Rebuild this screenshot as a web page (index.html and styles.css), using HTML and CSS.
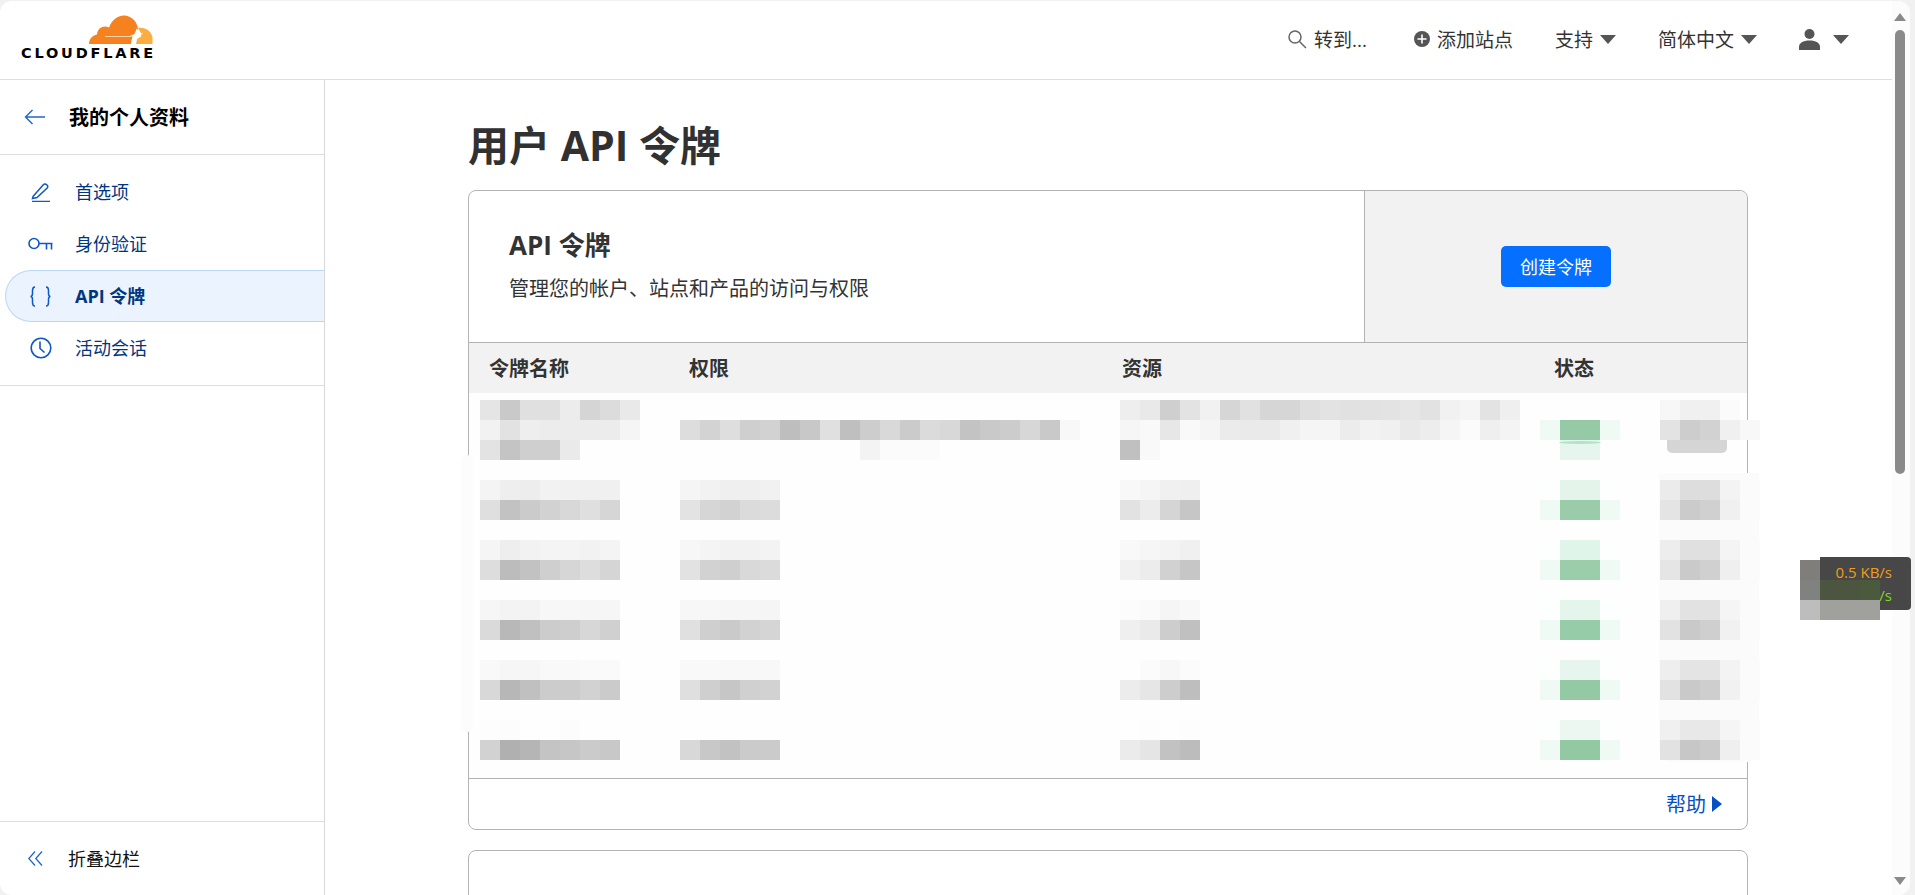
FILE: index.html
```html
<!DOCTYPE html>
<html lang="zh-CN">
<head>
  <meta charset="UTF-8">
  <meta name="viewport" content="width=device-width, initial-scale=1.0">
  <title>用户 API 令牌 | Cloudflare</title>
  <link rel="stylesheet" href="styles.css">
</head>
<body>
  <div class="window">
    <div class="page">
      <header class="topbar">
        <a class="logo">
          <svg class="logo-cloud" viewBox="0 0 64 30" width="64" height="30">
            <path fill="#f6821f" d="M0 29C.3 24 3 20.500 8 19.500 8.500 13 14.500 10 20 12.500 23.500 3.500 30.500 0 36 .5 43 1.500 48 6.500 49 13.500 47 17 45 20 44 21 42 25 42.500 27 42 29Z"/>
            <path fill="#fbad41" d="M49 13C55 11.500 62 15 63.500 22V29H45.500C46 26 47.500 24 49.500 23 52 22 53 20.500 52 18.500 51 16 50 15 49 13Z"/>
            <path fill="none" stroke="#fff" stroke-width=".8" stroke-opacity=".8" d="M16 21.500H42"/>
            <path fill="#fff" d="M48 13 48.800 18 54.500 18.500 49 20.500 47 29H44.500L45 22 41 21 45.500 19Z"/>
          </svg>
          <span class="logo-text">CLOUDFLARE</span>
        </a>
        <nav class="top-actions">
          <a class="top-action search-action">
            <svg class="icon-search" viewBox="0 0 20 20" width="20" height="20"><circle cx="8" cy="8" r="6" fill="none" stroke="#666" stroke-width="1.500"/><path d="M12.500 12.500 19 19" stroke="#666" stroke-width="1.500"/></svg>
            转到...
          </a>
          <a class="top-action">
            <svg viewBox="0 0 16 16" width="16" height="16"><circle cx="8" cy="8" r="8" fill="#555"/><path d="M8 3.500v9M3.500 8h9" stroke="#fff" stroke-width="1.600"/></svg>
            添加站点
          </a>
          <a class="top-action">支持 <span class="caret"></span></a>
          <a class="top-action">简体中文 <span class="caret"></span></a>
          <a class="top-action user-action">
            <svg viewBox="0 0 21 21" width="21" height="21"><circle cx="10.500" cy="5" r="5" fill="#555"/><path fill="#555" d="M0 21v-3c0-4 4-6.500 10.500-6.500S21 14 21 18v3Z"/></svg>
            <span class="caret"></span>
          </a>
        </nav>
      </header>

      <div class="content">
        <aside class="sidebar">
          <div class="side-head">
            <svg viewBox="0 0 21 16" width="21" height="16"><path d="M8.500 1 1.500 8l7 7M1.500 8H21" fill="none" stroke="#1f66cc" stroke-width="1.400"/></svg>
            <span>我的个人资料</span>
          </div>
          <ul class="side-nav">
            <li class="side-item">
              <span class="side-icon"><svg viewBox="0 0 20 20" width="20" height="20"><path d="M2 14.500 12.500 2.500c1-1 2.500-.5 3.500.5s1 2 .2 3L6 15.500 1.500 16.500ZM1 19.500h18" fill="none" stroke="#0f58c6" stroke-width="1.500"/></svg></span>
              首选项
            </li>
            <li class="side-item">
              <span class="side-icon"><svg viewBox="0 0 25 14" width="25" height="14"><circle cx="6" cy="6.500" r="5" fill="none" stroke="#0f58c6" stroke-width="1.600"/><path d="M11 6.500h13.500M18.500 6.500v6M23.500 6.500v6" fill="none" stroke="#0f58c6" stroke-width="1.600"/></svg></span>
              身份验证
            </li>
            <li class="side-item active">
              <span class="side-icon"><svg viewBox="0 0 21 21" width="21" height="21"><path d="M5 1C2.500 1 2.500 2.500 2.500 4.500v3C2.500 9 2 10.500.5 10.500 2 10.500 2.500 12 2.500 13.500v3C2.500 18.500 2.500 20 5 20M16 1c2.500 0 2.500 1.500 2.500 3.500v3c0 1.500.5 3 2 3-1.500 0-2 1.500-2 3v3c0 2 0 3.500-2.500 3.500" fill="none" stroke="#0f58c6" stroke-width="1.500"/></svg></span>
              API 令牌
            </li>
            <li class="side-item">
              <span class="side-icon"><svg viewBox="0 0 22 22" width="22" height="22"><circle cx="11" cy="11" r="9.800" fill="none" stroke="#0f58c6" stroke-width="1.600"/><path d="M10 4.500v7l4.500 4" fill="none" stroke="#0f58c6" stroke-width="1.600"/></svg></span>
              活动会话
            </li>
          </ul>
          <div class="side-foot">
            <svg viewBox="0 0 15 15" width="15" height="15"><path d="M7 .5 .8 7.500 7 14.500M14 .5 7.800 7.500 14 14.500" fill="none" stroke="#1f66cc" stroke-width="1.300"/></svg>
            <span>折叠边栏</span>
          </div>
        </aside>

        <main class="main">
          <h1>用户 API 令牌</h1>

          <section class="card">
            <div class="card-top">
              <div class="card-intro">
                <h2>API 令牌</h2>
                <p>管理您的帐户、站点和产品的访问与权限</p>
              </div>
              <div class="card-cta">
                <button class="btn-primary">创建令牌</button>
              </div>
            </div>

            <div class="table-head">
              <span>令牌名称</span>
              <span>权限</span>
              <span>资源</span>
              <span>状态</span>
            </div>

            <!-- the row values are blurred out in the screenshot, so each cell is a mosaic -->
            <div class="table-body">
              <div class="token-row first">
                <div class="mosaic" data-cells="e5 c9 e0 e0 ec d5 dc e9|f2 e2 ee ec ec ec ec f5|e3 c4 cf cf ea"></div>
                <div class="mosaic" data-cells="--|dd d3 de cf d2 be c8 e0 bf cd d9 cb db d8 c3 c9 cc d7 c9 f8|fe fe -- -- -- -- -- -- -- f3 fb fb fb"></div>
                <div class="mosaic" data-cells="ee e9 cf e3 f1 d6 e1 d6 d6 df e3 e1 e2 e3 e6 e2 f1 f5 e3 ef|f6 f9 e7 f9 f5 eb ea ea f0 f5 f5 ec f2 f0 e9 ed f5 fb ef f4|c0 f9"></div>
                <div class="mosaic status-cell" data-cells="--|eefaf3 96caa6 96caa6 eefaf3|-- e6f5ed e6f5ed"><i class="status-edge"></i></div>
                <div class="mosaic action-cell" data-cells="f7 f0 f0 fb|e3 cd d2 f0 f8"><i class="action-edge"></i></div>
              </div>
              <div class="token-row">
                <div class="mosaic" data-cells="f4 ee ed f2 f1 f0 f0|df c2 cb d2 d8 df d6"></div>
                <div class="mosaic" data-cells="f5 f2 ef ef f1|e3 d6 d2 db dc"></div>
                <div class="mosaic" data-cells="f8 f5 f0 ef|e2 ec d5 c6"></div>
                <div class="mosaic status-cell" data-cells="fcfffd e3f5ea e3f5ea fcfffd|eefaf3 9accaa 9accaa eefaf3"></div>
                <div class="mosaic action-cell" data-cells="eb dd dd f3 fb|e4 cb d0 f0 fb"></div>
              </div>
              <div class="token-row">
                <div class="mosaic" data-cells="f5 ee f2 f4 f4 f2 f4|dd bc c2 cf d6 dd d5"></div>
                <div class="mosaic" data-cells="f7 f4 f2 f2 f3|e2 d2 cf d9 db"></div>
                <div class="mosaic" data-cells="f9 f6 f3 f0|f1 ec d1 c6"></div>
                <div class="mosaic status-cell" data-cells="fcfffd e0f5e9 e0f5e9 fcfffd|eefaf3 9bcdaa 9bcdaa eefaf3"></div>
                <div class="mosaic action-cell" data-cells="ed e0 e0 f4 fb|e5 ca d0 ef fb"></div>
              </div>
              <div class="token-row">
                <div class="mosaic" data-cells="f6 f3 f3 f7 f7 f6 f6|da b8 c0 cc ce d7 d0"></div>
                <div class="mosaic" data-cells="f7 f7 f6 f6 f5|e0 cf ca d2 d5"></div>
                <div class="mosaic" data-cells="fc fa f5 f8|ef ea cd c0"></div>
                <div class="mosaic status-cell" data-cells="fcfffd e4f5ec e4f5ec fcfffd|eefaf3 96cca8 96cca8 eefaf3"></div>
                <div class="mosaic action-cell" data-cells="ef e2 e2 f5 fb|e2 c9 cf f1 fb"></div>
              </div>
              <div class="token-row">
                <div class="mosaic" data-cells="f9 f6 f6 f9 f9 fa fa|d8 b7 c0 cc cc d2 cb"></div>
                <div class="mosaic" data-cells="f9 f9 f8 f8 f8|df cf c6 d0 d2"></div>
                <div class="mosaic" data-cells="fe fb f7 fb|ec e6 cd be"></div>
                <div class="mosaic status-cell" data-cells="fcfffd e6f6ee e6f6ee fcfffd|eefaf3 93caa4 93caa4 eefaf3"></div>
                <div class="mosaic action-cell" data-cells="ee e4 e4 f3 fb|e2 c9 ce f1 fb"></div>
              </div>
              <div class="token-row">
                <div class="mosaic" data-cells="fd fc fe fe fc fe fe|d2 b0 b5 c4 c6 cb c8"></div>
                <div class="mosaic" data-cells="fe fe fe fe fe|d8 c8 c2 cb cb"></div>
                <div class="mosaic" data-cells="fe fd fe fd|eb e5 c2 bc"></div>
                <div class="mosaic status-cell" data-cells="fcfffd ecf7f1 ecf7f1 fcfffd|eefaf3 92c9a3 92c9a3 eefaf3"></div>
                <div class="mosaic action-cell" data-cells="f0 e8 e8 f5 fb|e2 c7 cb ef fb"></div>
              </div>
            </div>

            <div class="card-foot">
              <a class="help-link">帮助 <span class="caret-right"></span></a>
            </div>
          </section>

          <section class="card next-card"></section>
        </main>
      </div>
    </div>

    <div class="scrollbar">
      <span class="arrow-up"></span>
      <span class="thumb"></span>
      <span class="arrow-down"></span>
    </div>
  </div>

  <div class="net-widget">
    <span class="net-up">0.5 KB/s</span>
    <span class="net-down">/s</span>
    <div class="mosaic net-blur" data-cells="807e7a|808280 4b5540 4b5540 4b5a3c|bdbdbd a0a09d a0a09d a0a09d"></div>
  </div>

  <script src="mosaic.js"></script>
</body>
</html>
```

FILE: styles.css
```css
* {
  box-sizing: border-box;
}
body {
  position: relative;
  margin: 0;
  height: 895px;
  overflow: hidden;
  background-color: #f1f1f1;
  font-family: "Open Sans", "Noto Sans CJK SC", sans-serif;
  color: #333;
}
.window {
  display: flex;
  width: 1910px;
  height: 894px;
  margin-top: 1px;
  background-color: #fff;
  border-radius: 12px;
  overflow: hidden;
}
.page {
  display: flex;
  flex-direction: column;
  flex: 1;
  min-width: 0;
}

/* top bar */
.topbar {
  display: flex;
  justify-content: space-between;
  align-items: flex-start;
  height: 79px;
  flex-shrink: 0;
  padding: 0 43px 0 21px;
  border-bottom: 1px solid #dedede;
}
.logo {
  display: flex;
  flex-direction: column;
  align-items: flex-end;
  width: 132px;
  margin-top: 14px;
}
.logo-text {
  margin-top: 2px;
  width: 132px;
  font-family: "DejaVu Sans", sans-serif;
  font-size: 14.500px;
  font-weight: 700;
  line-height: 13px;
  letter-spacing: 2.800px;
  color: #000;
  white-space: nowrap;
}
.top-actions {
  display: flex;
  align-items: center;
  gap: 42px;
  height: 76px;
}
.top-action {
  display: flex;
  align-items: center;
  gap: 7px;
  font-size: 19px;
  color: #333;
  white-space: nowrap;
}
.user-action {
  gap: 13px;
}
.search-action {
  margin-right: 5px;
}
.caret {
  width: 0;
  height: 0;
  border-left: 8.500px solid transparent;
  border-right: 8.500px solid transparent;
  border-top: 9px solid #555;
}

/* sidebar */
.content {
  display: flex;
  flex: 1;
  min-height: 0;
}
.sidebar {
  display: flex;
  flex-direction: column;
  width: 325px;
  flex-shrink: 0;
  border-right: 1px solid #d8d8d8;
}
.side-head {
  display: flex;
  align-items: center;
  gap: 24px;
  height: 75px;
  padding-left: 24px;
  border-bottom: 1px solid #dedede;
  font-size: 20px;
  font-weight: 700;
  color: #000;
}
.side-head span,
.side-foot span {
  margin-top: -2px;
}
.side-nav {
  margin: 0;
  padding: 11px 0;
  list-style: none;
  border-bottom: 1px solid #dedede;
}
.side-item {
  display: flex;
  align-items: center;
  height: 52px;
  padding: 0 0 2px 75px;
  position: relative;
  font-size: 18px;
  color: #003681;
}
.side-icon {
  position: absolute;
  left: 28px;
  top: 0;
  width: 25px;
  height: 100%;
  display: flex;
  align-items: center;
  justify-content: center;
}
.side-item.active {
  margin-left: 5px;
  padding-left: 69px;
  background-color: #eaf3fe;
  border: 1px solid #b9d7f9;
  border-right: none;
  border-radius: 26px 0 0 26px;
  font-weight: 700;
}
.side-item.active .side-icon {
  left: 22px;
}
.side-foot {
  display: flex;
  align-items: center;
  gap: 25px;
  margin-top: auto;
  height: 74px;
  padding-left: 28px;
  border-top: 1px solid #dedede;
  font-size: 18px;
  color: #111;
}

/* main area */
.main {
  flex: 1;
  min-width: 0;
  padding: 39px 0 0 143px;
  overflow: hidden;
}
h1 {
  margin: -2px 0 17px;
  font-size: 41px;
  font-weight: 700;
  line-height: 56px;
  color: #313131;
}
.card {
  position: relative;
  width: 1280px;
  border: 1px solid #b3b3b3;
  border-radius: 8px;
  background-color: #fff;
}
.next-card {
  height: 200px;
  margin-top: 20px;
}
.card-top {
  display: flex;
  height: 152px;
  border-bottom: 1px solid #b3b3b3;
}
.card-intro {
  flex: 1;
  padding: 34px 0 0 40px;
  border-right: 1px solid #b3b3b3;
}
h2 {
  margin: 0 0 9px;
  font-size: 26px;
  font-weight: 700;
  line-height: 40px;
}
.card-intro p {
  margin: 0;
  font-size: 20px;
  line-height: 30px;
}
.card-cta {
  display: flex;
  align-items: center;
  justify-content: center;
  width: 382px;
  background-color: #f2f2f2;
  border-radius: 0 8px 0 0;
}
.btn-primary {
  width: 110px;
  height: 41px;
  padding: 0 0 2px;
  background-color: #0570ff;
  color: #fff;
  border: none;
  border-radius: 5px;
  font-family: inherit;
  font-size: 18px;
}

/* table */
.table-head {
  display: grid;
  grid-template-columns: 200px 433px 432px 1fr;
  align-items: center;
  height: 50px;
  padding: 0 0 2px 20px;
  background-color: #f2f2f2;
  font-size: 20px;
  font-weight: 700;
}
.table-body {
  position: relative;
  height: 385px;
  padding: 7px 0 0 11px;
  background-color: #fefefe;
}
.table-body::before {
  content: "";
  position: absolute;
  left: -8px;
  top: 62px;
  bottom: 46px;
  width: 12px;
  background-color: #fcfcfc;
  border-radius: 6px;
}
.table-body::after {
  content: "";
  position: absolute;
  right: -12px;
  top: 80px;
  bottom: 16px;
  width: 100px;
  background-color: #fbfbfb;
  border-radius: 0 0 12px 12px;
}
.token-row {
  position: relative;
  z-index: 1;
  display: grid;
  grid-template-columns: 200px 440px 420px 120px 100px;
  align-items: start;
  height: 60px;
}
.token-row.first {
  height: 80px;
}
.mosaic {
  position: relative;
}
.mosaic-line {
  position: relative;
  display: flex;
  height: 20px;
}
.mosaic-line span {
  width: 20px;
  height: 20px;
  flex-shrink: 0;
}
.status-edge {
  position: absolute;
  left: 19px;
  top: 41px;
  width: 42px;
  height: 3px;
  background-color: #aee5c4;
  border-radius: 50%;
  z-index: 2;
}
.action-edge {
  position: absolute;
  left: 7px;
  top: 13px;
  width: 60px;
  height: 40px;
  background-color: #d5d5d5;
  border-radius: 5px;
}
.card-foot {
  display: flex;
  justify-content: flex-end;
  align-items: center;
  height: 51px;
  padding: 0 25px 2px 0;
  border-top: 1px solid #b3b3b3;
}
.help-link {
  display: flex;
  align-items: center;
  gap: 6px;
  font-size: 20px;
  color: #0551c4;
}
.caret-right {
  width: 0;
  height: 0;
  margin-top: 2px;
  border-top: 8.500px solid transparent;
  border-bottom: 8.500px solid transparent;
  border-left: 10px solid #0551c4;
}

/* browser scrollbar */
.scrollbar {
  display: flex;
  flex-direction: column;
  align-items: center;
  width: 18px;
  flex-shrink: 0;
  padding: 12px 5px 10px 3px;
  background-color: #fcfcfc;
}
.arrow-up {
  width: 0;
  height: 0;
  border-left: 6.500px solid transparent;
  border-right: 6.500px solid transparent;
  border-bottom: 8px solid #8a8a8a;
}
.thumb {
  width: 10px;
  height: 444px;
  margin-top: 9px;
  background-color: #8a8a8a;
  border-radius: 5px;
}
.arrow-down {
  width: 0;
  height: 0;
  margin-top: auto;
  border-left: 6.500px solid transparent;
  border-right: 6.500px solid transparent;
  border-top: 8px solid #8a8a8a;
}

/* network speed widget, sits over the page */
.net-widget {
  position: absolute;
  left: 1800px;
  top: 557px;
  width: 111px;
  height: 53px;
  background: linear-gradient(to right, transparent 20px, #474747 20px);
  border-radius: 0 4px 4px 0;
  font-size: 15px;
  line-height: 22px;
}
.net-up {
  position: absolute;
  right: 19px;
  top: 4px;
  color: #f39c12;
}
.net-down {
  position: absolute;
  right: 19px;
  top: 27px;
  color: #7fd81e;
}
.net-blur {
  position: absolute;
  left: 0;
  top: 3px;
}
```

FILE: mosaic.js
```js
// fill each .mosaic from its data-cells: lines split by |, cells by space, "--" is empty
document.querySelectorAll('.mosaic').forEach(function (box) {
  box.dataset.cells.split('|').forEach(function (line) {
    const row = document.createElement('div');
    row.className = 'mosaic-line';
    line.split(' ').forEach(function (cell) {
      const span = document.createElement('span');
      if (cell !== '--') {
        span.style.backgroundColor = '#' + (cell.length === 2 ? cell + cell + cell : cell);
      }
      row.appendChild(span);
    });
    box.appendChild(row);
  });
});
```
